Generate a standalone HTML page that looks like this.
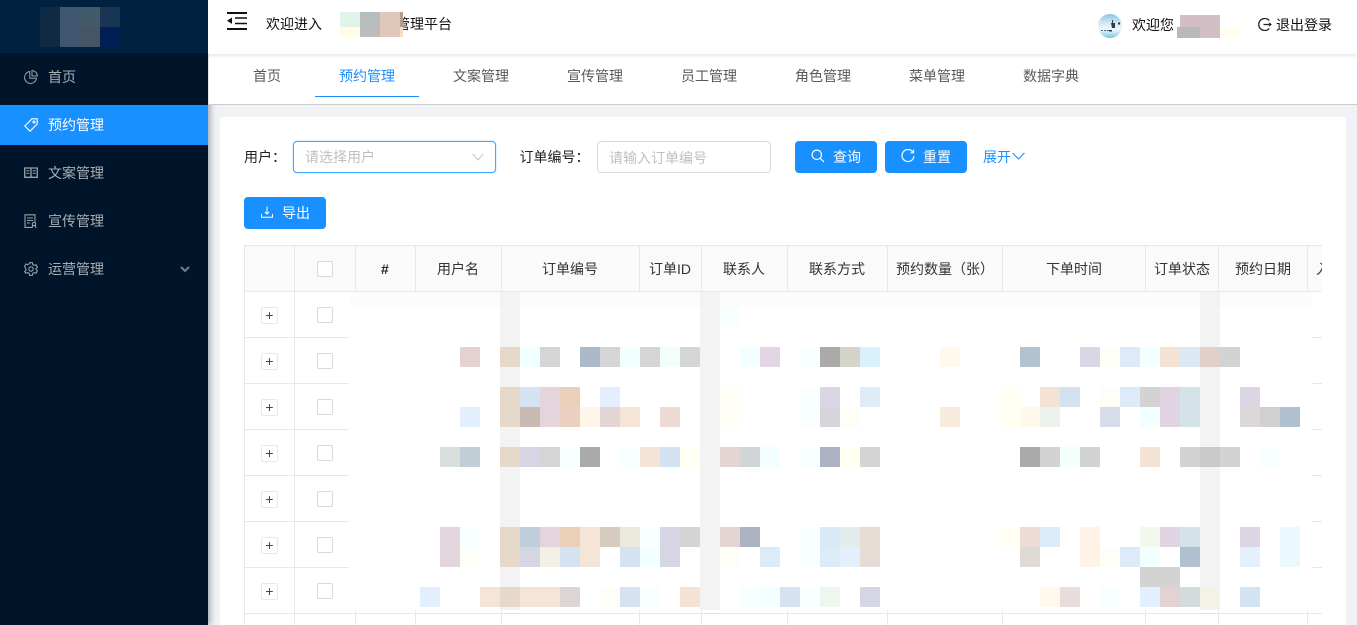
<!DOCTYPE html>
<html lang="zh"><head><meta charset="utf-8"><title>管理平台</title>
<style>
*{box-sizing:border-box;margin:0;padding:0}
html,body{width:1357px;height:625px;overflow:hidden;background:#f0f2f5}
body{position:relative;font:14px/20px "Liberation Sans","Noto Sans CJK SC",sans-serif;color:#333}
.a{position:absolute}
.t{position:absolute;white-space:nowrap;line-height:20px}
#side{left:0;top:0;width:208px;height:625px;background:#001529;box-shadow:2px 0 6px rgba(0,21,41,.35);z-index:3}
#side .t{left:48px;color:rgba(255,255,255,.65)}
#side svg{position:absolute;left:24px;fill:none;stroke:rgba(255,255,255,.6);stroke-width:1}
#head{left:208px;top:0;width:1149px;height:54px;background:#fff;box-shadow:0 1px 4px rgba(0,21,41,.14);clip-path:inset(0 0 -6px 0);z-index:5}
#tabs{left:208px;top:54px;width:1149px;height:51px;background:#fff;border-bottom:1px solid #ccc;border-left:1px solid #e4e4e4;z-index:4}
.tab{position:absolute;top:66px;color:#595959;z-index:5}
#card{left:220px;top:117px;width:1126px;height:520px;background:#fff;border-radius:2px}
.btn{position:absolute;background:#1890ff;border-radius:4px;height:32px;width:82px;top:141px;color:#fff}
.btn .t{top:6px;left:38px;color:#fff}
.btn svg{position:absolute;fill:none;stroke:#fff}
.inp{position:absolute;top:141px;height:32px;background:#fff;border:1px solid #d9d9d9;border-radius:4px}
.ph{color:#bfbfbf}
.h{position:absolute;top:259px;white-space:nowrap;color:#333;line-height:20px;z-index:2}
.vl{position:absolute;width:1px;background:#e8e8e8}
.hl{position:absolute;height:1px;background:#e8e8e8}
.cb{position:absolute;left:317px;width:16px;height:16px;background:#fff;border:1px solid #d9d9d9;border-radius:2px}
.pl{position:absolute;left:261px;width:17px;height:17px;background:#fff;border:1px solid #e8e8e8;border-radius:2px;font-size:14px;line-height:15px;text-align:center;color:#444}
#m rect{width:20px;height:20px}
</style></head><body>

<div id="side" class="a">
  <div class="a" style="left:0;top:0;width:208px;height:53px;background:#002140"></div>
  <div class="a" style="left:40px;top:7px;width:20px;height:40px;background:#0e2a45"></div>
  <div class="a" style="left:60px;top:7px;width:20px;height:40px;background:#3f566f"></div>
  <div class="a" style="left:80px;top:7px;width:20px;height:20px;background:#435a6b"></div>
  <div class="a" style="left:80px;top:27px;width:20px;height:20px;background:#465566"></div>
  <div class="a" style="left:100px;top:7px;width:20px;height:20px;background:#1a3553"></div>
  <div class="a" style="left:100px;top:27px;width:20px;height:20px;background:#001f54"></div>

  <svg style="top:70px" width="14" height="14" viewBox="0 0 14 14"><path d="M5.800 1.500A6 6 0 1 0 12.500 8.200H5.800z"/><path d="M8 .6A5.500 5.500 0 0 1 13.400 6H8z"/></svg>
  <div class="t" style="top:67px">首页</div>

  <div class="a" style="left:0;top:105px;width:208px;height:40px;background:#1890ff"></div>
  <svg style="top:118px;stroke:#fff;stroke-width:1.100" width="14" height="14" viewBox="0 0 14 14"><path d="M8 .8h5.200V6L6 13.200.8 8z"/><circle cx="10" cy="4" r="1"/></svg>
  <div class="t" style="top:115px;color:#fff">预约管理</div>

  <svg style="top:167px;stroke-width:1.300" width="14" height="12" viewBox="0 0 14 12"><path d="M.7 1h12.600v9.300H.7zM7 1v10"/><path d="M2.300 3.800h3M2.300 6.300h3M8.700 3.800h3M8.700 6.300h3" stroke-width="1"/></svg>
  <div class="t" style="top:163px">文案管理</div>

  <svg style="top:214px;stroke-width:1.100" width="14" height="15" viewBox="0 0 14 15"><path d="M8 13.400H1V.8h10v7M3 4h6M3 6.500h6M3 9h3"/><circle cx="10" cy="10" r="1.700"/><path d="M8.800 11.500 8 14M11.200 11.500l.8 2.500"/></svg>
  <div class="t" style="top:211px">宣传管理</div>

  <svg style="top:262px;stroke-width:1.100" width="14" height="14" viewBox="0 0 14 14"><path d="M5.600.7h2.800l.4 1.900 1.500.8 1.800-.6 1.300 2.400-1.400 1.300v1l1.400 1.300-1.300 2.400-1.800-.6-1.500.8-.4 1.900H5.600l-.4-1.900-1.500-.8-1.800.6L.6 9.600 2 8.300v-1L.6 4.400l1.300-2.400 1.800.6 1.500-.8z"/><circle cx="7" cy="7" r="2.200"/></svg>
  <div class="t" style="top:259px">运营管理</div>
  <svg style="left:180px;top:266px;stroke:rgba(255,255,255,.45);stroke-width:2" width="10" height="7" viewBox="0 0 10 7"><path d="M1 1l4 4 4-4"/></svg>
</div>

<div id="head" class="a"></div>
<div id="tabs" class="a"></div>

<!-- top bar -->
<div style="position:absolute;left:0;top:0;width:1357px;z-index:6;height:54px">
  <svg class="a" style="left:227px;top:12px" width="20" height="18" viewBox="0 0 20 18"><path d="M0 1h20M0 17h20" stroke="#111" stroke-width="2" fill="none"/><path d="M8 6h12M8 11.500h12" stroke="#111" stroke-width="1.500" fill="none"/><path d="M0 8.700 5 5.500v6.400z" fill="#111"/></svg>
  <div class="t" style="left:266px;top:14px;color:#111">欢迎进入</div>
  <div class="t" style="left:396px;top:14px;color:#111">管理平台</div>
  <div class="a" style="left:340px;top:12px;width:20px;height:15px;background:#e0f4ea"></div>
  <div class="a" style="left:340px;top:27px;width:20px;height:10px;background:#fffce9"></div>
  <div class="a" style="left:360px;top:12px;width:20px;height:15px;background:#b6bebc"></div>
  <div class="a" style="left:360px;top:27px;width:20px;height:10px;background:#bcbcbc"></div>
  <div class="a" style="left:380px;top:12px;width:20px;height:25px;background:#e1c6ba"></div>
  <div class="a" style="left:400px;top:12px;width:3px;height:15px;background:#b49f8c"></div>
  <div class="a" style="left:400px;top:27px;width:3px;height:10px;background:#f8dfc3"></div>

  <svg class="a" style="left:1098px;top:14px" width="24" height="24" viewBox="0 0 24 24"><defs><linearGradient id="g" x1="0" y1="0" x2="0" y2="1"><stop offset="0" stop-color="#8cc4e6"/><stop offset=".4" stop-color="#d8e9f3"/><stop offset=".65" stop-color="#f2f9fb"/><stop offset="1" stop-color="#74c4e8"/></linearGradient></defs><circle cx="12" cy="12" r="12" fill="url(#g)"/><path d="M13 9h4v5h-3zM20 8.500h2v2h-2zM11 16h3v1.500h-3zM14 6h1v3h-1z" fill="#2b3c4c"/><path d="M3 16.500h8" stroke="#52697c" stroke-width="1" stroke-dasharray="2 1"/></svg>
  <div class="t" style="left:1132px;top:15px;color:#111">欢迎您</div>
  <div class="a" style="left:1180px;top:15px;width:40px;height:23px;background:#d2bfc6"></div>
  <div class="a" style="left:1177px;top:27px;width:23px;height:11px;background:#b9b9b9"></div>
  <div class="a" style="left:1220px;top:28px;width:20px;height:10px;background:#fffff0"></div>
  <svg class="a" style="left:1258px;top:18px" width="14" height="13" viewBox="0 0 14 13" fill="none" stroke="#222" stroke-width="1.300"><path d="M11.300 2.600A6 6 0 1 0 11.300 10.400"/><path d="M5.500 6.500H13"/><path d="M11 4.800l2 1.700-2 1.700" stroke-width="1"/></svg>
  <div class="t" style="left:1276px;top:15px;color:#111">退出登录</div>
</div>

<!-- tabs -->
<div class="t tab" style="left:253px">首页</div>
<div class="t tab" style="left:339px;color:#1890ff">预约管理</div>
<div class="a" style="left:315px;top:96px;width:104px;height:1px;background:#1890ff;z-index:5"></div>
<div class="t tab" style="left:453px">文案管理</div>
<div class="t tab" style="left:567px">宣传管理</div>
<div class="t tab" style="left:681px">员工管理</div>
<div class="t tab" style="left:795px">角色管理</div>
<div class="t tab" style="left:909px">菜单管理</div>
<div class="t tab" style="left:1023px">数据字典</div>

<div id="card" class="a"></div>

<!-- form -->
<div class="t" style="left:244px;top:147px;color:#222">用户：</div>
<div class="inp" style="left:293px;width:203px;border-color:#40a9ff;box-shadow:0 0 0 .5px rgba(24,144,255,.25)"></div>
<div class="t ph" style="left:305px;top:147px">请选择用户</div>
<svg class="a" style="left:472px;top:153px" width="12" height="8" viewBox="0 0 12 8" fill="none" stroke="#c4c4c4"><path d="M.8 1 6 7l5.200-6"/></svg>
<div class="t" style="left:519.500px;top:147px;color:#222">订单编号：</div>
<div class="inp" style="left:597px;width:174px"></div>
<div class="t ph" style="left:609px;top:148px">请输入订单编号</div>

<div class="btn" style="left:795px"><svg style="left:16px;top:8px" width="14" height="14" viewBox="0 0 14 14" stroke-width="1.200"><circle cx="5.800" cy="5.800" r="4.700"/><path d="M9.300 9.300 13 13"/></svg><div class="t">查询</div></div>
<div class="btn" style="left:885px"><svg style="left:16px;top:8px" width="14" height="14" viewBox="0 0 14 14" stroke-width="1.200"><path d="M12 3.200A6 6 0 1 0 13 7"/><path d="M12.600 .8v3h-3"/></svg><div class="t">重置</div></div>
<div class="t" style="left:983px;top:147px;color:#1890ff">展开</div>
<svg class="a" style="left:1011.500px;top:152px" width="13" height="8" viewBox="0 0 13 8" fill="none" stroke="#1890ff" stroke-width="1.100"><path d="M.6 1 6.500 7 12.400 1"/></svg>

<div class="btn" style="left:244px;top:197px"><svg style="left:17px;top:9px" width="12" height="12" viewBox="0 0 12 12" stroke-width="1"><path d="M6 .5v7.500M3.800 5.800 6 8l2.200-2.200M.5 8v3.300h11V8"/></svg><div class="t">导出</div></div>

<!-- table -->
<div class="a" style="left:244px;top:245px;width:1078px;height:47px;background:#fafafa;border-radius:2px 0 0 0"></div>
<div class="hl" style="left:244px;top:245px;width:1078px"></div>
<div class="hl" style="left:244px;top:291px;width:1078px"></div>
<div class="vl" style="left:244px;top:245px;height:380px"></div>
<div class="vl" style="left:294px;top:245px;height:380px"></div>
<div class="vl" style="left:355px;top:245px;height:46px"></div>
<div class="vl" style="left:415px;top:245px;height:46px"></div>
<div class="vl" style="left:501px;top:245px;height:46px"></div>
<div class="vl" style="left:639px;top:245px;height:46px"></div>
<div class="vl" style="left:701px;top:245px;height:46px"></div>
<div class="vl" style="left:787px;top:245px;height:46px"></div>
<div class="vl" style="left:887px;top:245px;height:46px"></div>
<div class="vl" style="left:1002px;top:245px;height:46px"></div>
<div class="vl" style="left:1145px;top:245px;height:46px"></div>
<div class="vl" style="left:1218px;top:245px;height:46px"></div>
<div class="vl" style="left:1307px;top:245px;height:46px"></div>

<div class="hl" style="left:244px;top:337px;width:105px"></div><div class="hl" style="left:1312px;top:337px;width:10px"></div>
<div class="hl" style="left:244px;top:383px;width:105px"></div><div class="hl" style="left:1312px;top:383px;width:10px"></div>
<div class="hl" style="left:244px;top:429px;width:105px"></div><div class="hl" style="left:1312px;top:429px;width:10px"></div>
<div class="hl" style="left:244px;top:475px;width:105px"></div><div class="hl" style="left:1312px;top:475px;width:10px"></div>
<div class="hl" style="left:244px;top:521px;width:105px"></div><div class="hl" style="left:1312px;top:521px;width:10px"></div>
<div class="hl" style="left:244px;top:567px;width:105px"></div><div class="hl" style="left:1312px;top:567px;width:10px"></div>
<div class="hl" style="left:244px;top:613px;width:1078px"></div>

<div class="vl" style="left:355px;top:610px;height:15px"></div>
<div class="vl" style="left:415px;top:610px;height:15px"></div>
<div class="vl" style="left:501px;top:610px;height:15px"></div>
<div class="vl" style="left:639px;top:610px;height:15px"></div>
<div class="vl" style="left:701px;top:610px;height:15px"></div>
<div class="vl" style="left:787px;top:610px;height:15px"></div>
<div class="vl" style="left:887px;top:610px;height:15px"></div>
<div class="vl" style="left:1002px;top:610px;height:15px"></div>
<div class="vl" style="left:1145px;top:610px;height:15px"></div>
<div class="vl" style="left:1218px;top:610px;height:15px"></div>
<div class="vl" style="left:1307px;top:610px;height:15px"></div>

<div class="h" style="left:381px;font-weight:bold;color:#222">#</div>
<div class="h" style="left:437px">用户名</div>
<div class="h" style="left:542px">订单编号</div>
<div class="h" style="left:649px">订单ID</div>
<div class="h" style="left:723px">联系人</div>
<div class="h" style="left:809px">联系方式</div>
<div class="h" style="left:896px">预约数量（张）</div>
<div class="h" style="left:1046px">下单时间</div>
<div class="h" style="left:1154px">订单状态</div>
<div class="h" style="left:1235px">预约日期</div>
<div class="a" style="left:1308px;top:250px;width:14px;height:38px;overflow:hidden"><div class="h" style="left:8px;top:9px">入</div></div>

<div class="cb" style="top:261px"></div>
<div class="cb" style="top:307px"></div><div class="pl" style="top:307px">+</div>
<div class="cb" style="top:353px"></div><div class="pl" style="top:353px">+</div>
<div class="cb" style="top:399px"></div><div class="pl" style="top:399px">+</div>
<div class="cb" style="top:445px"></div><div class="pl" style="top:445px">+</div>
<div class="cb" style="top:491px"></div><div class="pl" style="top:491px">+</div>
<div class="cb" style="top:537px"></div><div class="pl" style="top:537px">+</div>
<div class="cb" style="top:583px"></div><div class="pl" style="top:583px">+</div>

<!-- obscured cells -->
<svg id="m" class="a" style="left:0;top:0;z-index:1" width="1357" height="625">
<rect x="350" y="292" style="width:962px;height:15px" fill="#fcfcfc"/>
<rect x="500" y="292" style="height:318px" fill="#f3f3f3"/>
<rect x="700" y="292" style="height:318px" fill="#f3f3f3"/>
<rect x="1200" y="292" style="height:318px" fill="#f3f3f3"/>
<rect x="720" y="307" fill="#f8ffff"/>
<g transform="translate(0,347)">
<rect x="460" fill="#e5d0d2"/><rect x="500" fill="#e6d9ca"/><rect x="520" fill="#f2ffff"/><rect x="540" fill="#d5d5d5"/><rect x="580" fill="#abb9c8"/><rect x="600" fill="#d5d5d5"/><rect x="620" fill="#f2ffff"/><rect x="640" fill="#d5d5d5"/><rect x="660" fill="#f2fff9"/><rect x="680" fill="#d4d5d4"/><rect x="740" fill="#f3ffff"/><rect x="760" fill="#e3d6e4"/><rect x="800" fill="#f9ffff"/><rect x="820" fill="#aaaaaa"/><rect x="840" fill="#d4d4c8"/><rect x="860" fill="#d8f1fb"/><rect x="940" fill="#fff8ec"/><rect x="1020" fill="#b3c2d1"/><rect x="1080" fill="#d7d7e5"/><rect x="1100" fill="#fdfef8"/><rect x="1120" fill="#ddebf8"/><rect x="1140" fill="#f3ffff"/><rect x="1160" fill="#f3e3d4"/><rect x="1180" fill="#dbe9f5"/><rect x="1200" fill="#e0d0c9"/><rect x="1220" fill="#d3d3d3"/>
</g>
<g transform="translate(0,387)">
<rect x="500" fill="#e6d9ca"/><rect x="520" fill="#d4e3f2"/><rect x="540" fill="#e4d5dd"/><rect x="560" fill="#ebd0b9"/><rect x="600" fill="#e3effc"/><rect x="720" fill="#fffff8"/><rect x="800" fill="#f9ffff"/><rect x="820" fill="#dcd6e4"/><rect x="860" fill="#dfebf6"/><rect x="1000" fill="#fffff4"/><rect x="1040" fill="#f3e3d7"/><rect x="1060" fill="#d3e1f1"/><rect x="1100" fill="#fdfef8"/><rect x="1120" fill="#ddebf8"/><rect x="1140" fill="#d3d3d3"/><rect x="1160" fill="#e2d3e3"/><rect x="1180" fill="#d5e3e8"/><rect x="1240" fill="#dcd6e4"/>
</g>
<g transform="translate(0,407)">
<rect x="460" fill="#e3effc"/><rect x="500" fill="#e6d9ca"/><rect x="520" fill="#c9bbb1"/><rect x="540" fill="#e4d5dd"/><rect x="560" fill="#ebd0c1"/><rect x="580" fill="#fff6ea"/><rect x="600" fill="#e3d5d4"/><rect x="620" fill="#f4e5d7"/><rect x="660" fill="#ecdbd5"/><rect x="720" fill="#fffff8"/><rect x="800" fill="#f9ffff"/><rect x="820" fill="#d5d5db"/><rect x="840" fill="#fdfef6"/><rect x="940" fill="#f7ebdd"/><rect x="1000" fill="#fffff4"/><rect x="1020" fill="#fff8ec"/><rect x="1040" fill="#ecf3ed"/><rect x="1100" fill="#d6dcea"/><rect x="1140" fill="#f3ffff"/><rect x="1160" fill="#e2d3e3"/><rect x="1180" fill="#d5e3e8"/><rect x="1240" fill="#dcd8d8"/><rect x="1260" fill="#cfd0d0"/><rect x="1280" fill="#b0c0cf"/>
</g>
<g transform="translate(0,447)">
<rect x="440" fill="#d8dfdc"/><rect x="460" fill="#c0ced6"/><rect x="500" fill="#e5d9c9"/><rect x="520" fill="#d6d5e3"/><rect x="540" fill="#d5d5d5"/><rect x="560" fill="#f8ffff"/><rect x="580" fill="#aaaaaa"/><rect x="620" fill="#f8ffff"/><rect x="640" fill="#f4e4d6"/><rect x="660" fill="#d3e2f1"/><rect x="680" fill="#fffff3"/><rect x="720" fill="#e4d5d4"/><rect x="740" fill="#d0d6d6"/><rect x="760" fill="#f3ffff"/><rect x="800" fill="#f9ffff"/><rect x="820" fill="#abb2c1"/><rect x="840" fill="#fffff2"/><rect x="860" fill="#d4d4d4"/><rect x="1020" fill="#aaaaaa"/><rect x="1040" fill="#d3d3d3"/><rect x="1060" fill="#f3fff9"/><rect x="1080" fill="#d3d3d3"/><rect x="1140" fill="#f3e3d4"/><rect x="1180" fill="#d3d3d3"/><rect x="1200" fill="#cacaca"/><rect x="1220" fill="#d3d3d3"/><rect x="1260" fill="#f9ffff"/>
</g>
<g transform="translate(0,527)">
<rect x="440" fill="#e3d5dd"/><rect x="460" fill="#f7ffff"/><rect x="500" fill="#e6d9ca"/><rect x="520" fill="#c1cedc"/><rect x="540" fill="#e4d5dd"/><rect x="560" fill="#ebd0b9"/><rect x="580" fill="#f4e5d7"/><rect x="600" fill="#d5ccbf"/><rect x="620" fill="#eaeadc"/><rect x="640" fill="#f8ffff"/><rect x="660" fill="#d6d5e3"/><rect x="680" fill="#d4d4d4"/><rect x="720" fill="#e3d5d4"/><rect x="740" fill="#abb2c1"/><rect x="800" fill="#f9ffff"/><rect x="820" fill="#d7eaf6"/><rect x="840" fill="#e3ebeb"/><rect x="860" fill="#e6dbd5"/><rect x="1000" fill="#fffff4"/><rect x="1020" fill="#ecdcd5"/><rect x="1040" fill="#dcebf8"/><rect x="1080" fill="#fff2e6"/><rect x="1140" fill="#f3f8ee"/><rect x="1160" fill="#e2d3e3"/><rect x="1180" fill="#d5e3e8"/><rect x="1240" fill="#dcd6e4"/><rect x="1280" fill="#ebf8fe"/>
</g>
<g transform="translate(0,547)">
<rect x="440" fill="#e3d5dd"/><rect x="460" fill="#fdfff7"/><rect x="500" fill="#e6d9ca"/><rect x="520" fill="#d6d5e3"/><rect x="540" fill="#f3f1e6"/><rect x="560" fill="#d4e2f1"/><rect x="580" fill="#f4e5d7"/><rect x="620" fill="#d4e2f1"/><rect x="640" fill="#f2ffff"/><rect x="660" fill="#d6d5e3"/><rect x="720" fill="#fefef8"/><rect x="760" fill="#dcebf8"/><rect x="800" fill="#f9ffff"/><rect x="820" fill="#dcebf8"/><rect x="840" fill="#e3effc"/><rect x="860" fill="#e6dbd5"/><rect x="1020" fill="#dfdad4"/><rect x="1080" fill="#fff2e6"/><rect x="1100" fill="#fdfef8"/><rect x="1120" fill="#ddebf8"/><rect x="1140" fill="#f3ffff"/><rect x="1180" fill="#b0c0cf"/><rect x="1240" fill="#e3f0fd"/><rect x="1280" fill="#ebf8fe"/>
</g>
<g transform="translate(0,567)"><rect x="1140" fill="#d3d3d3"/><rect x="1160" fill="#d3d3d3"/></g>
<g transform="translate(0,587)">
<rect x="420" fill="#e3effc"/><rect x="480" fill="#f4e5d7"/><rect x="500" fill="#e6d9ca"/><rect x="520" fill="#f4e5d7"/><rect x="540" fill="#f4e5d7"/><rect x="560" fill="#dcd5d5"/><rect x="600" fill="#fefef8"/><rect x="620" fill="#d4e2f1"/><rect x="640" fill="#f9ffff"/><rect x="680" fill="#f4e3d5"/><rect x="740" fill="#f8ffff"/><rect x="760" fill="#f3ffff"/><rect x="780" fill="#d4e2f1"/><rect x="800" fill="#f9ffff"/><rect x="820" fill="#ecf8ec"/><rect x="860" fill="#d6d5e3"/><rect x="1040" fill="#fff8ec"/><rect x="1060" fill="#e9dcdd"/><rect x="1100" fill="#f9ffff"/><rect x="1140" fill="#e3effc"/><rect x="1160" fill="#e2d3d2"/><rect x="1180" fill="#d3dbdc"/><rect x="1200" fill="#f2f2e6"/><rect x="1240" fill="#d4e3f2"/>
</g>
</svg>
</body></html>
